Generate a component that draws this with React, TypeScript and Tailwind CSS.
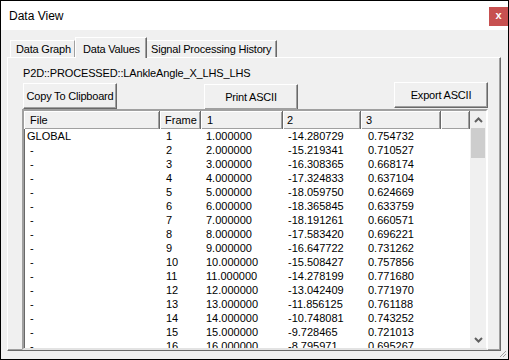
import React from "react";

const rows: [string, string, string, string, string][] = [
  ["GLOBAL", "1", "1.000000", "-14.280729", "0.754732"],
  ["-", "2", "2.000000", "-15.219341", "0.710527"],
  ["-", "3", "3.000000", "-16.308365", "0.668174"],
  ["-", "4", "4.000000", "-17.324833", "0.637104"],
  ["-", "5", "5.000000", "-18.059750", "0.624669"],
  ["-", "6", "6.000000", "-18.365845", "0.633759"],
  ["-", "7", "7.000000", "-18.191261", "0.660571"],
  ["-", "8", "8.000000", "-17.583420", "0.696221"],
  ["-", "9", "9.000000", "-16.647722", "0.731262"],
  ["-", "10", "10.000000", "-15.508427", "0.757856"],
  ["-", "11", "11.000000", "-14.278199", "0.771680"],
  ["-", "12", "12.000000", "-13.042409", "0.771970"],
  ["-", "13", "13.000000", "-11.856125", "0.761188"],
  ["-", "14", "14.000000", "-10.748081", "0.743252"],
  ["-", "15", "15.000000", "-9.728465", "0.721013"],
  ["-", "16", "16.000000", "-8.795971", "0.695267"],
];

const btn =
  "h-[26px] w-[94px] shrink-0 flex items-center justify-center whitespace-nowrap bg-[#f0f0f0] border border-t-white border-l-white border-r-[#696969] border-b-[#696969] shadow-[inset_-1px_-1px_0_#a0a0a0] text-[11px] tracking-[-0.2px] text-black";

const hcell =
  "h-full flex items-center whitespace-nowrap bg-[#f0f0f0] shadow-[inset_1px_1px_0_#fff,inset_-1px_-1px_0_#a0a0a0] border-r border-[#696969]";

export default function App() {
  return (
    <div
      className="w-[509px] h-[360px] border border-black flex flex-col bg-[#f0f0f0] relative overflow-hidden"
      style={{ fontFamily: '"Liberation Sans", Arial, sans-serif' }}
    >
      {/* Title bar */}
      <div className="h-[29px] shrink-0 bg-white flex items-start">
        <div className="h-full flex items-center pl-[8px] text-[12px] text-black flex-1">Data View</div>
        <div className="mt-[6px] w-[19px] h-[19px] bg-[#c75050] flex items-center justify-center text-white text-[11px] font-bold leading-none pb-[2px]">
          x
        </div>
      </div>

      {/* Body */}
      <div className="flex-1 flex flex-col pt-[7px] pl-[6px]">
        {/* Tabs */}
        <div className="h-[20px] flex items-end pl-[3px] relative z-10 text-[11px] tracking-[-0.2px] text-black whitespace-nowrap">
          <div className="shrink-0 h-[17px] w-[65px] pl-[5px] flex items-center border-t border-l border-white border-r border-r-[#a0a0a0]">
            Data Graph
          </div>
          <div className="shrink-0 h-[21px] w-[72px] pl-[7px] -mb-px flex items-start pt-[3px] bg-[#f0f0f0] border-t border-l border-white border-r border-r-[#696969] shadow-[inset_-1px_0_0_#a0a0a0]">
            Data Values
          </div>
          <div className="shrink-0 h-[17px] w-[130px] pl-[4px] flex items-center border-t border-white border-r border-r-[#696969] shadow-[inset_-1px_0_0_#a0a0a0]">
            Signal Processing History
          </div>
        </div>

        {/* Panel */}
        <div className="w-[494px] h-[294px] flex flex-col pt-[8px] pl-[14px] border border-t-white border-l-white border-r-[#696969] border-b-[#696969] shadow-[inset_-1px_-1px_0_#a0a0a0]">
          <div className="h-[14px] ml-px text-[11px] leading-[14px] tracking-[-0.15px] text-black whitespace-nowrap">
            P2D::PROCESSED::LAnkleAngle_X_LHS_LHS
          </div>
          <div className="h-[26px] mt-[3px] ml-px flex items-start">
            <div className={btn}>Copy To Clipboard</div>
            <div className={btn + " ml-[87px] mt-px"}>Print ASCII</div>
            <div className={btn + " ml-[96px] -mt-px"}>Export ASCII</div>
          </div>

          {/* List */}
          <div className="relative z-10 w-[466px] h-[241px] border-2 border-t-[#a0a0a0] border-l-[#a0a0a0] border-r-white border-b-[#e3e3e3] bg-white flex overflow-hidden shadow-[inset_1px_1px_0_#696969]">
            <div className="w-[446px] flex flex-col text-[11px] text-black">
              <div className="h-[18px] shrink-0 grid grid-cols-[136px_41px_82px_78px_80px_29px]">
                <div className={hcell + " pl-[6px]"}>File</div>
                <div className={hcell + " pl-[5px]"}>Frame</div>
                <div className={hcell + " pl-[6px]"}>1</div>
                <div className={hcell + " pl-[4px]"}>2</div>
                <div className={hcell + " pl-[5px]"}>3</div>
                <div className={hcell}></div>
              </div>
              {rows.map((r, i) => (
                <div key={i} className="h-[14px] shrink-0 leading-[14px] grid grid-cols-[136px_41px_82px_78px_80px_29px] whitespace-nowrap">
                  <div className={r[0] === "-" ? "pl-[6px]" : "pl-[3px]"}>{r[0]}</div>
                  <div className="pl-[6px]">{r[1]}</div>
                  <div className="pl-[5px]">{r[2]}</div>
                  <div className="pl-[5px]">{r[3]}</div>
                  <div className="pl-[7px]">{r[4]}</div>
                  <div></div>
                </div>
              ))}
            </div>
            {/* Scrollbar */}
            <div className="w-[16px] h-full bg-[#f0f0f0] flex flex-col">
              <div className="h-[17px] flex items-center justify-center">
                <svg width="9" height="6" viewBox="0 0 9 6">
                  <polyline points="1,5 4.5,1.5 8,5" fill="none" stroke="#606060" strokeWidth="2" />
                </svg>
              </div>
              <div className="h-[30px] mx-px bg-[#cdcdcd]"></div>
              <div className="flex-1"></div>
              <div className="h-[17px] flex items-center justify-center">
                <svg width="9" height="6" viewBox="0 0 9 6">
                  <polyline points="1,1 4.5,4.5 8,1" fill="none" stroke="#606060" strokeWidth="2" />
                </svg>
              </div>
            </div>
          </div>
        </div>
      </div>

      {/* Resize grip */}
      <svg className="absolute right-[1px] bottom-[1px]" width="8" height="8" viewBox="0 0 8 8">
        <line x1="7" y1="1" x2="1" y2="7" stroke="#a0a0a0" strokeWidth="1" />
        <line x1="7" y1="4" x2="4" y2="7" stroke="#a0a0a0" strokeWidth="1" />
      </svg>
    </div>
  );
}
